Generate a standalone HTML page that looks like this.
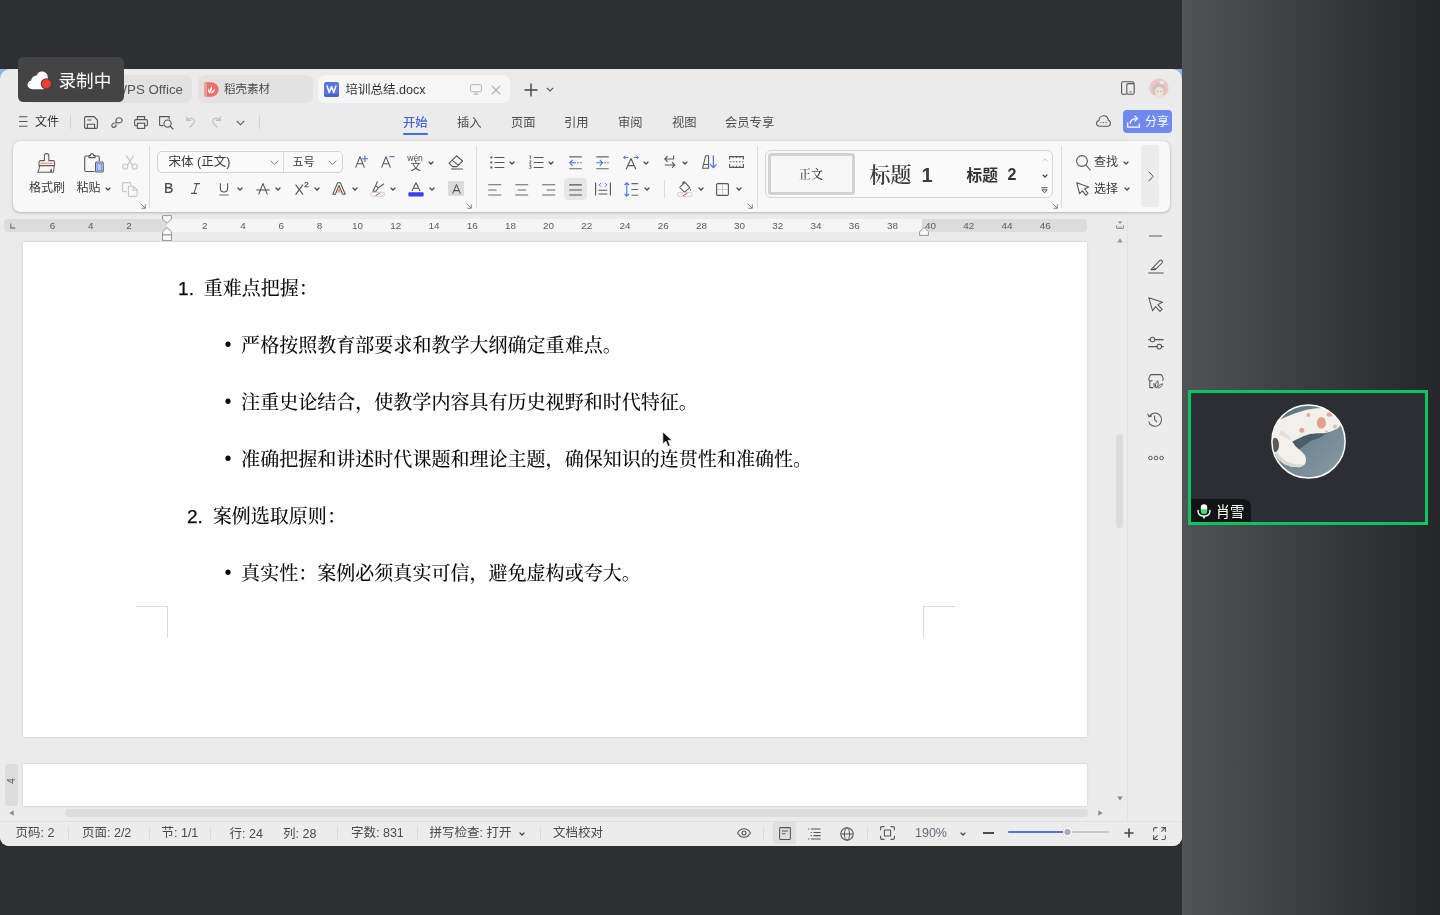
<!DOCTYPE html>
<html lang="zh-CN">
<head>
<meta charset="utf-8">
<title>培训总结.docx</title>
<style>
*{box-sizing:border-box;margin:0;padding:0}
html,body{width:1440px;height:915px;overflow:hidden}
body{background:#2d3033;font-family:"Liberation Sans","Noto Sans CJK SC",sans-serif;color:#3b3b3b;position:relative}
.abs{position:absolute}
svg{position:absolute;overflow:visible}
.t{position:absolute;white-space:nowrap;line-height:1}
#win,.ov{will-change:transform}
#right{left:1182px;top:0;width:258px;height:915px;background:linear-gradient(to right,#515356 0%,#3c3e41 45%,#242628 100%)}
#corner{left:0;top:69px;width:14px;height:14px;background:#8db4e6}
#corner2{left:1168px;top:69px;width:14px;height:14px;background:#8db4e6}
#win{z-index:0;left:0;top:69px;width:1182px;height:777px;background:#ebebeb;border-radius:10px 10px 9px 9px;overflow:hidden}
/* tabs */
.tab{position:absolute;top:6px;height:28px;border-radius:7px;background:#e2e2e2}
.tab.act{background:#f6f6f6}
/* ribbon */
#ribbon{left:12.5px;top:72.3px;width:1157px;height:70.4px;background:#f8f8f8;border-radius:7px;box-shadow:0 1px 3px rgba(0,0,0,.22),0 0 1px rgba(0,0,0,.2)}
.vsep{position:absolute;width:1px;background:#dcdcdc}
/* doc */
#page1{left:23px;top:173.4px;width:1064px;height:494.6px;background:#fefefe;box-shadow:0 0 2px rgba(0,0,0,.18)}
#page2{left:23px;top:695px;width:1064px;height:42px;background:#fefefe;box-shadow:0 0 2px rgba(0,0,0,.18)}
.doc{position:absolute;white-space:nowrap;font-family:"Liberation Sans","Noto Serif CJK SC",serif;font-size:19.05px;color:#0a0a0a;line-height:1;font-weight:500}
.sb{position:absolute;font-size:12.5px;color:#4a4a4a;white-space:nowrap;line-height:1}
.rul{position:absolute;font-size:9.9px;color:#5c5c5c;line-height:1;top:221px;transform:translateX(-50%)}
.sbs{top:827px;height:12px;background:#d9d9d9}
</style>
</head>
<body>
<div id="right" class="abs"></div>
<div id="corner" class="abs"></div>
<div id="corner2" class="abs"></div>
<div id="win" class="abs">
<!--TABS-->
<!-- tabs (win coords: y = screen-69) -->
<div class="tab" style="left:28px;width:164px"></div>
<div class="t" style="left:114.5px;top:14px;font-size:13.3px;color:#555">WPS Office</div>
<div class="tab" style="left:198px;width:115px"></div>
<svg style="left:203.5px;top:13px" width="15" height="15" viewBox="0 0 15 15"><path d="M0.5 1.5 Q0.5 0.3 1.8 0.3 H7.5 A7.2 7.2 0 0 1 7.5 14.7 H1.8 Q0.5 14.7 0.5 13.5Z" fill="#ec6f6c"/><path d="M0.5 1.5 Q0.5 0.3 1.8 0.3 H3 V14.7 H1.8 Q0.5 14.7 0.5 13.5Z" fill="#f09a97"/><path d="M5 11.2 C5 8.5 6 6 8 4.2 C8.3 6.5 7.5 9.5 5.6 11.4Z M6.8 11.3 C7.8 9.3 9.3 7.9 11 7.3 C10.7 9.3 9 11 7 11.6Z M4.6 10.6 C3.9 9.3 3.9 7.6 4.6 6.4 C5.2 7.6 5.2 9.3 4.9 10.6Z" fill="#fff"/></svg>
<div class="t" style="left:224px;top:15.2px;font-size:11.5px;color:#4a4a4a">稻壳素材</div>
<div class="tab act" style="left:318px;width:192px"></div>
<svg style="left:323.5px;top:13px" width="15" height="15" viewBox="0 0 15 15"><rect x="0" y="0" width="15" height="15" rx="2.2" fill="#5b74e3"/><path d="M0 12 H15 V12.8 Q15 15 12.8 15 H2.2 Q0 15 0 12.8Z" fill="#4a62cf"/><path d="M3.1 3.9 L5.2 10.6 L7.5 4.6 L9.8 10.6 L11.9 3.9" fill="none" stroke="#fff" stroke-width="1.5" stroke-linejoin="round" stroke-linecap="round"/></svg>
<div class="t" style="left:345.5px;top:14.7px;font-size:12.5px;color:#333">培训总结.docx</div>
<svg style="left:470px;top:15px" width="12" height="11" viewBox="0 0 12 11"><rect x="0.6" y="0.6" width="10.8" height="7.2" rx="1.2" fill="none" stroke="#b4b4b4" stroke-width="1"/><path d="M3.5 10.2 H8.5 M6 8 V10" stroke="#b4b4b4" stroke-width="1" fill="none"/></svg>
<svg style="left:491px;top:15.5px" width="10" height="10" viewBox="0 0 10 10"><path d="M0.7 0.7 L9.3 9.3 M9.3 0.7 L0.7 9.3" stroke="#a8a8a8" stroke-width="1.1" fill="none"/></svg>
<svg style="left:524px;top:14px" width="14" height="14" viewBox="0 0 14 14"><path d="M7 0.5 V13.5 M0.5 7 H13.5" stroke="#444" stroke-width="1.4" fill="none"/></svg>
<svg style="left:546px;top:18px" width="8" height="5" viewBox="0 0 8 5"><path d="M0.8 0.8 L4 4 L7.2 0.8" stroke="#555" stroke-width="1.2" fill="none"/></svg>
<!-- window right controls -->
<svg style="left:1121px;top:12px" width="14" height="14" viewBox="0 0 14 14"><path d="M5.8 13.2 H2 Q0.6 13.2 0.6 11.8 V2.2 Q0.6 0.8 2 0.8 H11.6 Q13 0.8 13 2.2 V3" fill="none" stroke="#555" stroke-width="1.1"/><rect x="5.8" y="2.6" width="7.4" height="10.6" rx="1.4" fill="none" stroke="#555" stroke-width="1.1"/><path d="M8.6 11 H10.6" stroke="#555" stroke-width="1"/></svg>
<svg style="left:1148.5px;top:8.5px;opacity:.6" width="20" height="20" viewBox="0 0 20 20"><defs><clipPath id="ua"><circle cx="10" cy="10" r="9.6"/></clipPath></defs><g clip-path="url(#ua)"><rect width="20" height="20" fill="#f2a9b4"/><ellipse cx="10" cy="12" rx="6.6" ry="7.6" fill="#b9aa9c"/><ellipse cx="10.4" cy="13.6" rx="4.4" ry="4.6" fill="#efdcc6"/><ellipse cx="13" cy="4.6" rx="2.6" ry="2" fill="#f7dfe2"/><rect x="0" y="17" width="20" height="3" fill="#e9e0d0"/><circle cx="8.6" cy="13.4" r="0.7" fill="#8a7a70"/><circle cx="12.2" cy="13.4" r="0.7" fill="#8a7a70"/></g></svg>
<!-- menu row -->
<svg style="left:19px;top:47px" width="9" height="11" viewBox="0 0 9 11"><path d="M0 0.8 H8.4 M0 5.5 H8.4 M0 10.2 H8.4" stroke="#555" stroke-width="1.1"/></svg>
<div class="t" style="left:35px;top:47px;font-size:12px;color:#333">文件</div>
<div class="vsep" style="left:70px;top:46px;height:14px;background:#d4d4d4"></div>
<svg style="left:84px;top:46.5px" width="14" height="13" viewBox="0 0 14 13"><path d="M0.6 2 Q0.6 0.6 2 0.6 H10 L13.4 4 V11 Q13.4 12.4 12 12.4 H2 Q0.6 12.4 0.6 11Z" fill="none" stroke="#555" stroke-width="1.1"/><path d="M3.4 12.4 V8.2 H10.6 V12.4 M3.4 4 H7.6" fill="none" stroke="#555" stroke-width="1.1"/></svg>
<svg style="left:110.5px;top:48px" width="12" height="11" viewBox="0 0 12 11"><path d="M5.6 5.6 C4 3.4 5.4 0.7 8 0.7 C10.8 0.7 12 3.4 10.6 5 C9.6 6.2 7.8 6 6.2 5.8 C4.2 5.6 2.2 5.8 1.2 7.2 C0.2 8.8 1.2 10.4 2.8 10.4 C4.6 10.4 5.6 8.8 5 7.4" fill="none" stroke="#555" stroke-width="1.1" stroke-linecap="round"/></svg>
<svg style="left:134px;top:46.5px" width="14" height="13" viewBox="0 0 14 13"><path d="M3.4 3.6 V0.6 H10.6 V3.6" fill="none" stroke="#555" stroke-width="1.1"/><path d="M3.2 9.8 H2 Q0.6 9.8 0.6 8.4 V5 Q0.6 3.6 2 3.6 H12 Q13.4 3.6 13.4 5 V8.4 Q13.4 9.8 12 9.8 H10.8" fill="none" stroke="#555" stroke-width="1.1"/><rect x="3.4" y="7.2" width="7.2" height="5.2" fill="none" stroke="#555" stroke-width="1.1"/></svg>
<svg style="left:159px;top:47px" width="15" height="14" viewBox="0 0 15 14"><path d="M4.5 9.6 H1.8 Q0.6 9.6 0.6 8.4 V0.6 H10.2 V3.2" fill="none" stroke="#555" stroke-width="1.1"/><circle cx="8.6" cy="7.6" r="3.6" fill="none" stroke="#555" stroke-width="1.1"/><path d="M11.2 10.2 L14 13" stroke="#555" stroke-width="1.1" stroke-linecap="round"/></svg>
<svg style="left:186px;top:47px" width="10" height="12" viewBox="0 0 10 12"><path d="M0.8 0.6 V4.4 H4.6 M0.9 4.3 C2.6 2.2 5.6 1.6 7.4 3.2 C9.2 4.8 8.4 7.6 3.8 11.2" fill="none" stroke="#bdbdbd" stroke-width="1.1" stroke-linecap="round" stroke-linejoin="round"/></svg>
<svg style="left:211px;top:47px" width="10" height="12" viewBox="0 0 10 12"><path d="M9.2 0.6 V4.4 H5.4 M9.1 4.3 C7.4 2.2 4.4 1.6 2.6 3.2 C0.8 4.8 1.6 7.6 6.2 11.2" fill="none" stroke="#bdbdbd" stroke-width="1.1" stroke-linecap="round" stroke-linejoin="round"/></svg>
<svg style="left:236px;top:50.5px" width="9" height="6" viewBox="0 0 9 6"><path d="M0.7 0.8 L4.5 4.8 L8.3 0.8" stroke="#555" stroke-width="1.1" fill="none"/></svg>
<div class="vsep" style="left:259px;top:46px;height:14px;background:#d4d4d4"></div>
<div class="t" style="left:403px;top:47.5px;font-size:12.3px;color:#4466d6;font-weight:500">开始</div>
<div class="abs" style="left:403px;top:63.5px;width:25px;height:2px;background:#4a6ddc;border-radius:1px"></div>
<div class="t" style="left:457px;top:47.5px;font-size:12.3px;color:#4a4a4a">插入</div>
<div class="t" style="left:511px;top:47.5px;font-size:12.3px;color:#4a4a4a">页面</div>
<div class="t" style="left:564px;top:47.5px;font-size:12.3px;color:#4a4a4a">引用</div>
<div class="t" style="left:618px;top:47.5px;font-size:12.3px;color:#4a4a4a">审阅</div>
<div class="t" style="left:672px;top:47.5px;font-size:12.3px;color:#4a4a4a">视图</div>
<div class="t" style="left:725px;top:47.5px;font-size:12.3px;color:#4a4a4a">会员专享</div>
<svg style="left:1096px;top:46px" width="15" height="12" viewBox="0 0 15 12"><path d="M3.6 11.2 C1.6 11.2 0.6 9.8 0.6 8.4 C0.6 7 1.6 5.9 2.9 5.7 C3.1 2.8 5.2 0.7 7.7 0.7 C10.2 0.7 12 2.6 12.3 5 C13.6 5.4 14.4 6.6 14.4 8 C14.4 9.8 13 11.2 11.4 11.2Z" fill="none" stroke="#555" stroke-width="1.1"/><circle cx="5" cy="7.6" r="0.7" fill="#555"/><circle cx="7.5" cy="7.6" r="0.7" fill="#555"/><circle cx="10" cy="7.6" r="0.7" fill="#555"/></svg>
<div class="abs" style="left:1123px;top:41px;width:49px;height:23px;border-radius:4px;background:#7089f1"></div>
<svg style="left:1127px;top:46px" width="13" height="13" viewBox="0 0 13 13"><path d="M0.7 7.4 V12.2 H12.3 V8.6" fill="none" stroke="#fff" stroke-width="1.2"/><path d="M3 8.6 C3.4 5.4 5.6 3.6 9.6 3.6 M7.6 0.8 L10.6 3.6 L7.6 6.4" fill="none" stroke="#fff" stroke-width="1.2"/></svg>
<div class="t" style="left:1145px;top:46.5px;font-size:12px;color:#fff">分享</div>
<!--MENU-->
<div id="ribbon" class="abs"></div>
<div id="page1" class="abs"></div>
<div id="page2" class="abs"></div>
<div id="scr" class="abs" style="left:0;top:-69px;width:1182px;height:915px">
<!-- ribbon contents in screen coords -->
<div>
<!-- clipboard group -->
<svg style="left:37px;top:153px" width="19" height="20" viewBox="0 0 19 20"><path d="M7.4 7.6 V2.6 Q7.4 0.6 9.6 0.6 Q11.8 0.6 11.8 2.6 V7.6 H15.8 Q17.6 7.6 17.6 9.4 V12.6 H2 V9.4 Q2 7.6 3.8 7.6Z" fill="none" stroke="#5a5a5a" stroke-width="1.05" stroke-linejoin="round"/><path d="M2.6 12.6 C2.5 15 1.9 17.2 0.8 19.3 H13.2 C13.8 18.2 14.1 17.2 14.3 16.2 C14.5 17.2 14.5 18.2 14.2 19.3 H16.2 C17 17 17.3 15 17.1 12.6" fill="none" stroke="#5a5a5a" stroke-width="1.05" stroke-linejoin="round"/><path d="M3.4 10.2 H16.2" stroke="#e8825a" stroke-width="1.1"/></svg>
<div class="t" style="left:29px;top:181.5px;font-size:12px;color:#3a3a3a">格式刷</div>
<svg style="left:84px;top:153px" width="20" height="20" viewBox="0 0 20 20"><path d="M5 3 H2.2 Q0.7 3 0.7 4.5 V17 Q0.7 18.5 2.2 18.5 H10.5 M11 3 H13.8 Q15.3 3 15.3 4.5 V8" fill="none" stroke="#555" stroke-width="1.1"/><path d="M5 4.6 V2.6 H6.4 Q6.4 0.6 8 0.6 Q9.6 0.6 9.6 2.6 H11 V4.6Z" fill="none" stroke="#555" stroke-width="1.1" stroke-linejoin="round"/><rect x="11.6" y="9" width="7.6" height="10" rx="1" fill="#fff" stroke="#555" stroke-width="1.1"/><rect x="13" y="10.3" width="4.8" height="7.4" fill="#b9c9fb" stroke="#5a7bf0" stroke-width="0.9"/></svg>
<div class="t" style="left:76.5px;top:181.5px;font-size:12px;color:#3a3a3a">粘贴</div>
<svg class="car" style="left:105px;top:186.8px" width="6" height="4" viewBox="0 0 6 4"><path d="M0.6 0.6 L3 3 L5.4 0.6" fill="none" stroke="#444" stroke-width="1.3"/></svg>
<svg style="left:121.5px;top:155px" width="16" height="15" viewBox="0 0 16 15"><path d="M4.4 0.6 L10.6 10.4 M11.6 0.6 L5.4 10.4" stroke="#c6c6c6" stroke-width="1.1" fill="none"/><circle cx="3.3" cy="11.6" r="2.6" fill="none" stroke="#c6c6c6" stroke-width="1.1"/><circle cx="12.7" cy="11.6" r="2.6" fill="none" stroke="#c6c6c6" stroke-width="1.1"/></svg>
<svg style="left:121.5px;top:181.5px" width="16" height="15" viewBox="0 0 16 15"><path d="M4.6 9.6 H2 Q0.6 9.6 0.6 8.2 V2 Q0.6 0.6 2 0.6 H7.4 Q8.8 0.6 8.8 2 V3.6" fill="none" stroke="#c6c6c6" stroke-width="1.1"/><path d="M6.4 4.2 H11.4 L15.2 8 V13 Q15.2 14.4 13.8 14.4 H7.8 Q6.4 14.4 6.4 13Z" fill="none" stroke="#c6c6c6" stroke-width="1.1" stroke-linejoin="round"/><path d="M11.2 4.4 V8.2 H15" fill="none" stroke="#c6c6c6" stroke-width="1.1"/></svg>
<svg class="lau" style="left:139.5px;top:202.7px" width="6" height="6" viewBox="0 0 6 6"><path d="M0.6 0.6 L5 5 M5.3 1.4 V5.3 H1.4" fill="none" stroke="#777" stroke-width="0.9"/></svg>
<div class="vsep" style="left:148.5px;top:146px;height:62px"></div>
<!-- font group -->
<div class="abs" style="left:157px;top:150.5px;width:185.5px;height:22.5px;border:1px solid #d3d3d3;border-radius:5px;background:#fafafa"></div>
<div class="abs" style="left:283px;top:151px;width:1px;height:21.5px;background:#d8d8d8"></div>
<div class="t" style="left:168.5px;top:155.5px;font-size:12.5px;color:#3a3a3a">宋体 (正文)</div>
<svg style="left:270px;top:159.5px" width="9" height="6" viewBox="0 0 9 6"><path d="M0.6 0.7 L4.4 4.6 L8.2 0.7" fill="none" stroke="#777" stroke-width="1"/></svg>
<div class="t" style="left:292.5px;top:156.5px;font-size:11px;color:#3a3a3a">五号</div>
<svg style="left:328px;top:159.5px" width="9" height="6" viewBox="0 0 9 6"><path d="M0.6 0.7 L4.4 4.6 L8.2 0.7" fill="none" stroke="#777" stroke-width="1"/></svg>
<svg style="left:354.5px;top:154px" width="15" height="15" viewBox="0 0 15 15"><path d="M0.6 13.6 L5 2.6 L9.4 13.6 M2.2 9.8 H7.8" fill="none" stroke="#555" stroke-width="1.1" stroke-linejoin="round"/><path d="M9.9 1.6 V8 M6.7 4.8 H13.1" stroke="#4a6fe8" stroke-width="1.1" fill="none"/></svg>
<svg style="left:381px;top:154px" width="15" height="15" viewBox="0 0 15 15"><path d="M0.6 13.6 L5 2.6 L9.4 13.6 M2.2 9.8 H7.8" fill="none" stroke="#555" stroke-width="1.1" stroke-linejoin="round"/><path d="M8.2 2.6 H13.6" stroke="#4a6fe8" stroke-width="1.1" fill="none"/></svg>
<div class="t" style="left:407.3px;top:153.6px;font-size:8.6px;color:#4a4a4a;letter-spacing:-.1px">wén</div>
<div class="t" style="left:410.4px;top:161.3px;font-size:10.6px;color:#4a4a4a">文</div>
<svg class="car" style="left:428.0px;top:160.7px" width="6" height="4" viewBox="0 0 6 4"><path d="M0.6 0.6 L3 3 L5.4 0.6" fill="none" stroke="#444" stroke-width="1.3"/></svg>
<svg style="left:448px;top:154.5px" width="16" height="15" viewBox="0 0 16 15"><path d="M8.6 0.8 L14.6 6 L9 11.6 H4.6 L1 8.2Z M4.6 5.6 L10.4 10.4" fill="none" stroke="#555" stroke-width="1.1" stroke-linejoin="round"/><path d="M3 14 H15" stroke="#555" stroke-width="1"/></svg>
<!-- row 2 -->
<div class="t" style="left:164px;top:181px;font-size:14px;color:#444;font-weight:400;-webkit-text-stroke:.2px #444">B</div>
<svg style="left:190px;top:183px" width="11" height="11" viewBox="0 0 11 11"><path d="M4 0.6 H10 M1 10.4 H7 M7 0.6 L4 10.4" fill="none" stroke="#555" stroke-width="1.1"/></svg>
<svg style="left:219px;top:182.5px" width="10" height="13" viewBox="0 0 10 13"><path d="M1.4 0.3 V5.6 Q1.4 9 5 9 Q8.6 9 8.6 5.6 V0.3" fill="none" stroke="#555" stroke-width="1.1"/><path d="M0.4 12 H9.6" stroke="#666" stroke-width="1"/></svg>
<svg class="car" style="left:236.5px;top:186.8px" width="6" height="4" viewBox="0 0 6 4"><path d="M0.6 0.6 L3 3 L5.4 0.6" fill="none" stroke="#444" stroke-width="1.3"/></svg>
<svg style="left:255.5px;top:182.5px" width="14" height="12" viewBox="0 0 14 12"><path d="M2.6 11.4 L7 0.6 L11.4 11.4" fill="none" stroke="#555" stroke-width="1.1" stroke-linejoin="round"/><path d="M0.3 7 H13.7" stroke="#555" stroke-width="1.1"/></svg>
<svg class="car" style="left:275px;top:186.8px" width="6" height="4" viewBox="0 0 6 4"><path d="M0.6 0.6 L3 3 L5.4 0.6" fill="none" stroke="#444" stroke-width="1.3"/></svg>
<svg style="left:295px;top:182px" width="14" height="13" viewBox="0 0 14 13"><path d="M0.6 2.6 L8 12.6 M8 2.6 L0.6 12.6" fill="none" stroke="#555" stroke-width="1.1"/></svg>
<div class="t" style="left:304.3px;top:181.3px;font-size:8px;color:#4a4a4a;font-weight:400;-webkit-text-stroke:.25px #4a4a4a">2</div>
<svg class="car" style="left:313.5px;top:186.8px" width="6" height="4" viewBox="0 0 6 4"><path d="M0.6 0.6 L3 3 L5.4 0.6" fill="none" stroke="#444" stroke-width="1.3"/></svg>
<svg style="left:332px;top:182px" width="14" height="13" viewBox="0 0 14 13"><path d="M0.8 12.2 L5.6 0.8 H8.4 L13.2 12.2 H10.6 L7 3.4 L3.4 12.2Z" fill="none" stroke="#555" stroke-width="1.05" stroke-linejoin="round"/><path d="M7 5.6 L9 10.4 H5Z" fill="#e99a6c"/></svg>
<svg class="car" style="left:352px;top:186.8px" width="6" height="4" viewBox="0 0 6 4"><path d="M0.6 0.6 L3 3 L5.4 0.6" fill="none" stroke="#444" stroke-width="1.3"/></svg>
<svg style="left:370px;top:181px" width="16" height="16" viewBox="0 0 16 16"><path d="M3 10.2 L5.6 4.6 L8.4 6.8 L6 10.2Z M8.4 6.8 L13.6 3 M5.6 4.6 L7.4 0.8" fill="none" stroke="#555" stroke-width="1.05" stroke-linejoin="round" stroke-linecap="round"/><rect x="0.6" y="11.4" width="14" height="3.8" rx="1.6" fill="#fafafa" stroke="#c9c9c9" stroke-width="0.9"/><path d="M5.6 14.6 L10 12" stroke="#e4453a" stroke-width="1"/></svg>
<svg class="car" style="left:390px;top:186.8px" width="6" height="4" viewBox="0 0 6 4"><path d="M0.6 0.6 L3 3 L5.4 0.6" fill="none" stroke="#444" stroke-width="1.3"/></svg>
<svg style="left:408px;top:182px" width="16" height="15" viewBox="0 0 16 15"><path d="M4 9 L8 0.8 L12 9 M5.4 6.2 H10.6" fill="none" stroke="#555" stroke-width="1.1" stroke-linejoin="round"/><rect x="0.4" y="10.2" width="15.2" height="4.2" rx="1" fill="#3a3ff0"/></svg>
<svg class="car" style="left:428.5px;top:186.8px" width="6" height="4" viewBox="0 0 6 4"><path d="M0.6 0.6 L3 3 L5.4 0.6" fill="none" stroke="#444" stroke-width="1.3"/></svg>
<div class="abs" style="left:448.3px;top:181.3px;width:15.4px;height:14.6px;background:#dbdbdb;border-radius:1.5px"></div>
<svg style="left:451.5px;top:183.5px" width="9" height="10" viewBox="0 0 9 10"><path d="M0.6 9.6 L4.5 0.6 L8.4 9.6 M2 6.6 H7" fill="none" stroke="#555" stroke-width="1.05" stroke-linejoin="round"/></svg>
<svg class="lau" style="left:465.5px;top:202.7px" width="6" height="6" viewBox="0 0 6 6"><path d="M0.6 0.6 L5 5 M5.3 1.4 V5.3 H1.4" fill="none" stroke="#777" stroke-width="0.9"/></svg>
<div class="vsep" style="left:475.5px;top:146px;height:62px"></div>
</div>
<div>
<!-- paragraph group row1 -->
<svg style="left:489.5px;top:156px" width="15" height="13" viewBox="0 0 15 13"><circle cx="1.3" cy="1.5" r="1.15" fill="#666"/><circle cx="1.3" cy="6.5" r="1.15" fill="#666"/><circle cx="1.3" cy="11.5" r="1.15" fill="#666"/><path d="M4.6 1.5 H14.4 M4.6 6.5 H14.4 M4.6 11.5 H14.4" stroke="#555" stroke-width="1.1"/></svg>
<svg class="car" style="left:509.0px;top:160.7px" width="6" height="4" viewBox="0 0 6 4"><path d="M0.6 0.6 L3 3 L5.4 0.6" fill="none" stroke="#444" stroke-width="1.3"/></svg>
<svg style="left:528.5px;top:155px" width="15" height="14" viewBox="0 0 15 14"><path d="M4.8 2.5 H14.4 M4.8 7.5 H14.4 M4.8 12.5 H14.4" stroke="#555" stroke-width="1.1"/><path d="M0.4 1.2 L1.4 0.5 V4 M0.3 5.9 H2.2 L0.4 8.8 H2.4 M0.3 10.6 H2.2 L1.2 11.9 Q2.4 12.2 2.2 13 Q1.8 13.9 0.3 13.5" fill="none" stroke="#555" stroke-width="0.8"/></svg>
<svg class="car" style="left:547.5px;top:160.7px" width="6" height="4" viewBox="0 0 6 4"><path d="M0.6 0.6 L3 3 L5.4 0.6" fill="none" stroke="#444" stroke-width="1.3"/></svg>
<svg style="left:568.5px;top:155.5px" width="13" height="14" viewBox="0 0 13 14"><path d="M0.3 0.9 H12.7 M0.3 12.7 H12.7" stroke="#666" stroke-width="1.1"/><path d="M8.2 6.8 H9.8 M11 6.8 H12.7" stroke="#666" stroke-width="1.1"/><path d="M0.8 6.8 H7 M3.6 3.8 L0.8 6.8 L3.6 9.8" fill="none" stroke="#4a6fe8" stroke-width="1.1"/></svg>
<svg style="left:595.5px;top:155.5px" width="13" height="14" viewBox="0 0 13 14"><path d="M0.3 0.9 H12.7 M0.3 12.7 H12.7" stroke="#666" stroke-width="1.1"/><path d="M8.4 6.8 H10 M11.2 6.8 H12.7" stroke="#666" stroke-width="1.1"/><path d="M0.3 6.8 H6.6 M3.8 3.8 L6.6 6.8 L3.8 9.8" fill="none" stroke="#4a6fe8" stroke-width="1.1"/></svg>
<svg style="left:623px;top:154.5px" width="16" height="15" viewBox="0 0 16 15"><path d="M3.2 14.2 L8 3.6 L12.8 14.2 M4.8 10.6 H11.2" fill="none" stroke="#555" stroke-width="1.1" stroke-linejoin="round"/><path d="M0.6 2.4 H5.4 M2.4 0.6 L0.6 2.4 L2.4 4.2 M10.6 2.4 H15.4 M13.6 0.6 L15.4 2.4 L13.6 4.2" fill="none" stroke="#4a6fe8" stroke-width="1"/></svg>
<svg class="car" style="left:643.0px;top:160.7px" width="6" height="4" viewBox="0 0 6 4"><path d="M0.6 0.6 L3 3 L5.4 0.6" fill="none" stroke="#444" stroke-width="1.3"/></svg>
<svg style="left:664px;top:155px" width="12" height="14" viewBox="0 0 12 14"><path d="M9.6 0.6 V4 H0.8 M3.6 1.2 L0.8 4 L3.6 6.8" fill="none" stroke="#555" stroke-width="1.1"/><path d="M0.8 10 H10.8 M8 7.2 L10.8 10 L8 12.8" fill="none" stroke="#555" stroke-width="1.1"/></svg>
<svg class="car" style="left:681.5px;top:160.7px" width="6" height="4" viewBox="0 0 6 4"><path d="M0.6 0.6 L3 3 L5.4 0.6" fill="none" stroke="#444" stroke-width="1.3"/></svg>
<svg style="left:702px;top:155px" width="16" height="14" viewBox="0 0 16 14"><path d="M0.6 13.2 L3.6 0.8 H6.6 V13.2Z M1.6 9.4 H6.4" fill="none" stroke="#555" stroke-width="1.05" stroke-linejoin="round"/><path d="M11.4 0.6 V12.6 M8.2 9.4 L11.4 12.6 L14.6 9.4" fill="none" stroke="#4a6fe8" stroke-width="1.2"/></svg>
<svg style="left:729px;top:156px" width="15" height="12" viewBox="0 0 15 12"><path d="M0.6 3.6 V0.6 H14.4 V3.6 M0.6 8 V11.4 H14.4 V8" fill="none" stroke="#555" stroke-width="1.1"/><path d="M0.6 5.8 H14.4" stroke="#555" stroke-width="1.1" stroke-dasharray="1.6 1.5"/><path d="M4 9.6 V11.4 M7.5 9.6 V11.4 M11 9.6 V11.4 M4 0.6 V2 M7.5 0.6 V2 M11 0.6 V2" stroke="#555" stroke-width="0.9"/></svg>
<!-- row2 -->
<svg style="left:488px;top:183.5px" width="14" height="12" viewBox="0 0 14 12"><path d="M0.2 0.8 H13.2 M0.2 6 H8.6 M0.2 11 H13.2" stroke="#666" stroke-width="1.1"/></svg>
<svg style="left:515px;top:183.5px" width="14" height="12" viewBox="0 0 14 12"><path d="M0.2 0.8 H13.2 M2.6 6 H10.8 M0.2 11 H13.2" stroke="#666" stroke-width="1.1"/></svg>
<svg style="left:541.5px;top:183.5px" width="14" height="12" viewBox="0 0 14 12"><path d="M0.2 0.8 H13.2 M4.8 6 H13.2 M0.2 11 H13.2" stroke="#666" stroke-width="1.1"/></svg>
<div class="abs" style="left:564px;top:177.5px;width:22.5px;height:22.5px;border-radius:4px;background:#e7e7e7"></div>
<svg style="left:568.5px;top:183.5px" width="14" height="12" viewBox="0 0 14 12"><path d="M0.2 0.8 H12.8 M0.2 6 H12.8 M0.2 11 H12.8" stroke="#555" stroke-width="1.2"/></svg>
<svg style="left:594.5px;top:181.5px" width="16" height="14" viewBox="0 0 16 14"><path d="M0.6 0.4 V13.6 M15.4 0.4 V13.6" stroke="#555" stroke-width="1.1"/><path d="M3.6 8.2 H12.4 M3.6 12 H12.4" stroke="#555" stroke-width="1.1"/><path d="M6.2 0.8 L4.2 2.8 L6.2 4.8 M9.8 0.8 L11.8 2.8 L9.8 4.8" fill="none" stroke="#4a6fe8" stroke-width="1"/></svg>
<svg style="left:624px;top:181.5px" width="15" height="15" viewBox="0 0 15 15"><path d="M2.8 0.8 V14.2 M0.6 3 L2.8 0.8 L5 3 M0.6 12 L2.8 14.2 L5 12" fill="none" stroke="#4a6fe8" stroke-width="1.1"/><path d="M7.4 1.6 H14.2 M7.4 7.5 H14.2 M7.4 13.2 H14.2" stroke="#666" stroke-width="1.1"/></svg>
<svg class="car" style="left:643.5px;top:186.8px" width="6" height="4" viewBox="0 0 6 4"><path d="M0.6 0.6 L3 3 L5.4 0.6" fill="none" stroke="#444" stroke-width="1.3"/></svg>
<div class="vsep" style="left:664px;top:180px;height:17.5px"></div>
<svg style="left:677px;top:180.5px" width="16" height="16" viewBox="0 0 16 16"><path d="M3.4 5.6 L8 1.4 L12.8 6.6 L8.2 10.6 Q7.4 11.2 6.6 10.4 L3.2 7 Q2.6 6.2 3.4 5.6Z M6 3.6 Q5 0.6 7.6 0.8" fill="none" stroke="#555" stroke-width="1.05" stroke-linejoin="round"/><path d="M13.6 7.6 Q14.8 9.4 13.6 10 Q12.4 9.4 13.6 7.6Z" fill="#555"/><rect x="0.6" y="11.6" width="14.6" height="3.8" rx="1.6" fill="#fafafa" stroke="#c9c9c9" stroke-width="0.9"/><path d="M6 14.8 L10.4 12.2" stroke="#e4453a" stroke-width="1"/></svg>
<svg class="car" style="left:697.5px;top:186.8px" width="6" height="4" viewBox="0 0 6 4"><path d="M0.6 0.6 L3 3 L5.4 0.6" fill="none" stroke="#444" stroke-width="1.3"/></svg>
<svg style="left:716px;top:182.5px" width="13" height="13" viewBox="0 0 13 13"><rect x="0.6" y="0.6" width="11.8" height="11.8" rx="1.2" fill="none" stroke="#555" stroke-width="1.1"/><path d="M6.5 1 V12 M1 6.5 H12" stroke="#c4c4c4" stroke-width="0.9"/></svg>
<svg class="car" style="left:735.5px;top:186.8px" width="6" height="4" viewBox="0 0 6 4"><path d="M0.6 0.6 L3 3 L5.4 0.6" fill="none" stroke="#444" stroke-width="1.3"/></svg>
<svg class="lau" style="left:746.5px;top:202.7px" width="6" height="6" viewBox="0 0 6 6"><path d="M0.6 0.6 L5 5 M5.3 1.4 V5.3 H1.4" fill="none" stroke="#777" stroke-width="0.9"/></svg>
<div class="vsep" style="left:756.5px;top:146px;height:62px"></div>
<!-- styles gallery -->
<div class="abs" style="left:764.5px;top:150px;width:288px;height:47.5px;border:1px solid #d6d6d6;border-radius:6px;background:#fafafa"></div>
<div class="abs" style="left:767.5px;top:153.3px;width:87.5px;height:41.7px;border:3px solid #d2d2d2;border-radius:3px;background:#f7f7f7"></div>
<div class="t" style="left:799px;top:169px;font-size:12px;color:#1e1e1e;font-family:'Liberation Serif','Noto Serif CJK SC',serif">正文</div>
<div class="t" style="left:869.5px;top:164.5px;font-size:21px;color:#3c3c3c;font-family:'Liberation Serif','Noto Serif CJK SC',serif;font-weight:600">标题</div>
<div class="t" style="left:921.5px;top:165px;font-size:20px;color:#3c3c3c;font-weight:700">1</div>
<div class="t" style="left:966.5px;top:167.5px;font-size:15.7px;color:#333;font-weight:700">标题</div>
<div class="t" style="left:1007.5px;top:167px;font-size:16px;color:#333;font-weight:700">2</div>
<svg style="left:1041.5px;top:157.5px" width="6" height="4" viewBox="0 0 6 4"><path d="M0.6 3.2 L3 0.8 L5.4 3.2" fill="none" stroke="#c9c9c9" stroke-width="1"/></svg>
<svg style="left:1041.5px;top:173.5px" width="6" height="4" viewBox="0 0 6 4"><path d="M0.6 0.6 L3 3 L5.4 0.6" fill="none" stroke="#444" stroke-width="1.3"/></svg>
<svg style="left:1041px;top:187px" width="7" height="7" viewBox="0 0 7 7"><path d="M0.4 0.7 H6.6" stroke="#555" stroke-width="1"/><path d="M0.8 2.8 H6.2 L3.5 5.8Z" fill="none" stroke="#555" stroke-width="1" stroke-linejoin="round"/></svg>
<svg class="lau" style="left:1051.5px;top:202.7px" width="6" height="6" viewBox="0 0 6 6"><path d="M0.6 0.6 L5 5 M5.3 1.4 V5.3 H1.4" fill="none" stroke="#777" stroke-width="0.9"/></svg>
<div class="vsep" style="left:1060.5px;top:146px;height:62px"></div>
<!-- find/select -->
<svg style="left:1075.5px;top:154.5px" width="15" height="16" viewBox="0 0 15 16"><circle cx="6" cy="6" r="5.4" fill="none" stroke="#555" stroke-width="1.1"/><path d="M10 10.2 L14.2 15" stroke="#555" stroke-width="1.1" stroke-linecap="round"/></svg>
<div class="t" style="left:1094px;top:155.5px;font-size:12px;color:#3a3a3a">查找</div>
<svg class="car" style="left:1123.0px;top:160.7px" width="6" height="4" viewBox="0 0 6 4"><path d="M0.6 0.6 L3 3 L5.4 0.6" fill="none" stroke="#444" stroke-width="1.3"/></svg>
<svg style="left:1075.5px;top:181.5px" width="14" height="14" viewBox="0 0 14 14"><path d="M0.7 0.7 L12.6 5 L8.6 7 L12 11.4 L9.8 13.2 L6.4 8.8 L3.6 11.6Z" fill="none" stroke="#555" stroke-width="1.1" stroke-linejoin="round"/></svg>
<div class="t" style="left:1094px;top:183px;font-size:12px;color:#3a3a3a">选择</div>
<svg class="car" style="left:1123.5px;top:187px" width="6" height="4" viewBox="0 0 6 4"><path d="M0.6 0.6 L3 3 L5.4 0.6" fill="none" stroke="#444" stroke-width="1.3"/></svg>
<div class="abs" style="left:1141px;top:145px;width:18px;height:62px;border-radius:4px;background:#ececec"></div>
<svg style="left:1148px;top:171px" width="6" height="11" viewBox="0 0 6 11"><path d="M0.6 0.6 L5.2 5.4 L0.6 10.2" fill="none" stroke="#555" stroke-width="1"/></svg>
</div>
<!--RIBBON2-->
<!--RULERS-->
<div class="abs" style="left:4px;top:218.7px;width:1083px;height:13.5px;border-radius:4px;background:#dcdcdc"></div>
<div class="abs" style="left:166.5px;top:218.7px;width:755px;height:13.5px;background:#f5f5f5"></div>
<svg style="left:10px;top:222.5px" width="6" height="6" viewBox="0 0 6 6"><path d="M0.8 0.4 V5 H5.2" fill="none" stroke="#808080" stroke-width="1.3"/></svg>
<div class="rul" style="left:52.6px">6</div>
<div class="rul" style="left:90.8px">4</div>
<div class="rul" style="left:129.0px">2</div>
<div class="rul" style="left:204.8px">2</div>
<div class="rul" style="left:243.0px">4</div>
<div class="rul" style="left:281.2px">6</div>
<div class="rul" style="left:319.4px">8</div>
<div class="rul" style="left:357.6px">10</div>
<div class="rul" style="left:395.8px">12</div>
<div class="rul" style="left:434.0px">14</div>
<div class="rul" style="left:472.2px">16</div>
<div class="rul" style="left:510.4px">18</div>
<div class="rul" style="left:548.6px">20</div>
<div class="rul" style="left:586.8px">22</div>
<div class="rul" style="left:625.0px">24</div>
<div class="rul" style="left:663.2px">26</div>
<div class="rul" style="left:701.4px">28</div>
<div class="rul" style="left:739.6px">30</div>
<div class="rul" style="left:777.8px">32</div>
<div class="rul" style="left:816.0px">34</div>
<div class="rul" style="left:854.2px">36</div>
<div class="rul" style="left:892.4px">38</div>
<div class="rul" style="left:930.6px">40</div>
<div class="rul" style="left:968.8px">42</div>
<div class="rul" style="left:1007.0px">44</div>
<div class="rul" style="left:1045.2px">46</div>
<svg style="left:161.5px;top:214.5px" width="10" height="9" viewBox="0 0 10 9"><path d="M0.6 0.6 H9.4 V4.2 L5 8.2 L0.6 4.2Z" fill="#fafafa" stroke="#8a8a8a" stroke-width="0.9" stroke-linejoin="round"/></svg>
<svg style="left:161.5px;top:227px" width="10" height="14" viewBox="0 0 10 14"><path d="M0.6 8 V4.6 L5 0.6 L9.4 4.6 V8Z" fill="#fafafa" stroke="#8a8a8a" stroke-width="0.9" stroke-linejoin="round"/><rect x="0.6" y="8" width="8.8" height="5.4" fill="#fafafa" stroke="#8a8a8a" stroke-width="0.9"/></svg>
<svg style="left:918.5px;top:227px" width="10" height="9" viewBox="0 0 10 9"><path d="M0.6 8.4 V4.6 L5 0.6 L9.4 4.6 V8.4Z" fill="#fafafa" stroke="#8a8a8a" stroke-width="0.9" stroke-linejoin="round"/></svg>
<!--DOCS-->
<div class="abs" style="left:136px;top:606px;width:31.5px;height:1px;background:#dadada"></div>
<div class="abs" style="left:167px;top:606px;width:1px;height:32px;background:#dadada"></div>
<div class="abs" style="left:923px;top:606px;width:32px;height:1px;background:#dadada"></div>
<div class="abs" style="left:923px;top:606px;width:1px;height:32px;background:#dadada"></div>
<div class="doc" style="left:178.1px;top:278.6px;-webkit-text-stroke:.25px #111">1.</div>
<div class="doc" style="left:203.7px;top:278.6px">重难点把握：</div>
<div class="doc" style="left:224.6px;top:334.1px;font-size:20px">•</div>
<div class="doc" style="left:241.1px;top:336.1px">严格按照教育部要求和教学大纲确定重难点。</div>
<div class="doc" style="left:224.6px;top:391.3px;font-size:20px">•</div>
<div class="doc" style="left:241.1px;top:393.3px">注重史论结合，使教学内容具有历史视野和时代特征。</div>
<div class="doc" style="left:224.6px;top:448.4px;font-size:20px">•</div>
<div class="doc" style="left:241.1px;top:450.4px">准确把握和讲述时代课题和理论主题，确保知识的连贯性和准确性。</div>
<div class="doc" style="left:186.9px;top:506.6px;-webkit-text-stroke:.25px #111">2.</div>
<div class="doc" style="left:212.7px;top:506.6px">案例选取原则：</div>
<div class="doc" style="left:224.6px;top:561.7px;font-size:20px">•</div>
<div class="doc" style="left:241.1px;top:563.7px">真实性：案例必须真实可信，避免虚构或夸大。</div>
<svg style="left:662px;top:431px" width="11" height="17" viewBox="0 0 11 17"><path d="M0.8 0.8 V13 L3.8 10.2 L6 15.6 L8.2 14.6 L6 9.4 H10Z" fill="#111" stroke="#f4f4f4" stroke-width="0.8" stroke-linejoin="round"/></svg>
<!--SIDEST-->
<!-- vertical scroll + side toolbar (screen coords) -->
<div class="abs" style="left:1126.8px;top:213px;width:1px;height:608px;background:#e2e2e2"></div>
<div class="abs" style="left:1127.8px;top:107px;width:54.2px;height:714px;background:#ececec;z-index:-1"></div>
<svg style="left:1116px;top:221px" width="8" height="8" viewBox="0 0 8 8"><path d="M1.6 0.4 H6.4 L4 2.8Z" fill="#8a8a8a"/><path d="M0.6 4.4 V7.4 H7.4 V4.4 M3 5.6 V7.4 M5 5.6 V7.4" fill="none" stroke="#8a8a8a" stroke-width="1"/></svg>
<svg style="left:1116.5px;top:238px" width="6" height="5" viewBox="0 0 6 5"><path d="M3 0.2 L5.8 4.6 H0.2Z" fill="#9a9a9a"/></svg>
<svg style="left:1116.5px;top:795.5px" width="6" height="5" viewBox="0 0 6 5"><path d="M3 4.8 L5.8 0.4 H0.2Z" fill="#8c8c8c"/></svg>
<div class="abs" style="left:1116.3px;top:433.5px;width:7px;height:94.5px;border-radius:3.5px;background:#dbdbdb"></div>
<div class="abs" style="left:1148.5px;top:234.8px;width:13.5px;height:1.8px;background:#a4a4a4"></div>
<svg style="left:1147.5px;top:259px" width="16" height="15" viewBox="0 0 16 15"><path d="M3 10.6 L11.6 1.6 Q12.8 0.4 14 1.6 Q15.2 2.8 14 4 L7.2 10.6Z M5 8.4 L7.8 10.2" fill="none" stroke="#555" stroke-width="1.05" stroke-linejoin="round"/><path d="M0.2 14 H15.6" stroke="#555" stroke-width="1.1"/></svg>
<svg style="left:1147.5px;top:297px" width="16" height="15" viewBox="0 0 16 15"><path d="M0.8 0.7 L14.6 5.2 L9.8 7.6 L14.2 12.4 L12 14.4 L7.6 9.6 L4.6 13.8Z" fill="none" stroke="#555" stroke-width="1.05" stroke-linejoin="round"/></svg>
<svg style="left:1147.5px;top:336px" width="16" height="14" viewBox="0 0 16 14"><path d="M0.2 3.6 H2.4 M6.6 3.6 H15.6 M0.2 10.6 H9.2 M13.4 10.6 H15.6" stroke="#555" stroke-width="1.05"/><circle cx="4.5" cy="3.6" r="2.3" fill="none" stroke="#555" stroke-width="1.05"/><circle cx="11.3" cy="10.6" r="2.3" fill="none" stroke="#555" stroke-width="1.05"/></svg>
<svg style="left:1147.5px;top:374px" width="16" height="15" viewBox="0 0 16 15"><path d="M5.4 13.6 H1.8 V7 Q0.4 6 0.8 4.4 L2.2 1.4 Q2.6 0.6 3.6 0.6 H12.4 Q13.4 0.6 13.8 1.4 L15.2 4.4 Q15.6 6 14.2 6.6 M1.8 7 Q3.4 7.4 4.4 6" fill="none" stroke="#555" stroke-width="1.05" stroke-linejoin="round"/><path d="M8 13.8 C7 11.4 7.4 8.8 9.6 6.6 C10.6 9 10.4 11.6 8.6 13.8Z M9.6 13.8 C10.4 11.8 12 10.4 14.4 9.8 C14.2 12.2 12.4 13.8 10 14Z M7.2 13.4 C6 12.4 5.6 11 6 9.4 C7 10.4 7.4 11.8 7.4 13.2Z" fill="none" stroke="#555" stroke-width="0.9" stroke-linejoin="round"/></svg>
<svg style="left:1147px;top:411.5px" width="16" height="15" viewBox="0 0 16 15"><path d="M2.2 4.4 A6.6 6.6 0 1 1 1.6 9.6" fill="none" stroke="#555" stroke-width="1.05"/><path d="M0.6 1.8 L2 4.8 L5 3.8" fill="none" stroke="#555" stroke-width="1.05" stroke-linejoin="round"/><path d="M7.6 3.6 V7.6 L10 10.2" fill="none" stroke="#555" stroke-width="1.05"/></svg>
<svg style="left:1147.5px;top:455px" width="16" height="6" viewBox="0 0 16 6"><circle cx="2.4" cy="3" r="1.8" fill="none" stroke="#555" stroke-width="0.95"/><circle cx="8" cy="3" r="1.8" fill="none" stroke="#555" stroke-width="0.95"/><circle cx="13.6" cy="3" r="1.8" fill="none" stroke="#555" stroke-width="0.95"/></svg>
<!-- left vertical ruler bit + hscroll -->
<div class="abs" style="left:5px;top:763.5px;width:12.5px;height:42px;border-radius:3.5px;background:#dcdcdc"></div>
<div class="abs" style="left:6.4px;top:775px;width:12px;height:12px;line-height:12px;text-align:center;font-size:10px;color:#555;transform:rotate(-90deg)">4</div>
<svg style="left:8.5px;top:810px" width="5" height="6" viewBox="0 0 5 6"><path d="M0.3 3 L4.7 0.3 V5.7Z" fill="#8c8c8c"/></svg>
<svg style="left:1097.5px;top:810px" width="5" height="6" viewBox="0 0 5 6"><path d="M4.7 3 L0.3 0.3 V5.7Z" fill="#8c8c8c"/></svg>
<div class="abs" style="left:64.5px;top:809.3px;width:1023px;height:7.4px;border-radius:3.7px;background:#dddddd"></div>
<!-- status bar -->
<div class="abs" style="left:0;top:821px;width:1182px;height:1px;background:#e0e0e0"></div>
<div class="abs" style="left:0;top:822px;width:1182px;height:24px;background:#ececec;z-index:-1"></div>
<div class="sb" style="left:15.5px;top:827px">页码: 2</div>
<div class="sb" style="left:82px;top:827px">页面: 2/2</div>
<div class="sb" style="left:161.5px;top:827px">节: 1/1</div>
<div class="sb" style="left:229.5px;top:827.5px">行: 24</div>
<div class="sb" style="left:283px;top:827.5px">列: 28</div>
<div class="sb" style="left:351px;top:827px">字数: 831</div>
<div class="sb" style="left:429.5px;top:827px">拼写检查: 打开</div>
<svg class="car" style="left:518.5px;top:831.5px" width="6" height="4" viewBox="0 0 6 4"><path d="M0.6 0.6 L3 3 L5.4 0.6" fill="none" stroke="#444" stroke-width="1.3"/></svg>
<div class="sb" style="left:553px;top:827px">文档校对</div>
<div class="vsep sbs" style="left:68px"></div><div class="vsep sbs" style="left:148.5px"></div><div class="vsep sbs" style="left:210px"></div><div class="vsep sbs" style="left:336.5px"></div><div class="vsep sbs" style="left:416.5px"></div><div class="vsep sbs" style="left:539.5px"></div><div class="vsep sbs" style="left:763px"></div><div class="vsep sbs" style="left:866.5px"></div>
<svg style="left:736.5px;top:828px" width="14" height="10" viewBox="0 0 14 10"><path d="M0.6 5 C2.2 2 4.4 0.7 7 0.7 C9.6 0.7 11.8 2 13.4 5 C11.8 8 9.6 9.3 7 9.3 C4.4 9.3 2.2 8 0.6 5Z" fill="none" stroke="#555" stroke-width="1.05"/><circle cx="7" cy="5" r="2" fill="none" stroke="#555" stroke-width="1.05"/></svg>
<div class="abs" style="left:773px;top:822px;width:23px;height:22px;border-radius:3px;background:#dfdfdf"></div>
<svg style="left:779px;top:827px" width="12" height="13" viewBox="0 0 12 13"><rect x="0.6" y="0.6" width="10.8" height="11.8" rx="0.8" fill="none" stroke="#555" stroke-width="1.05"/><path d="M3 4 H9 M3 6.8 H6.4" stroke="#555" stroke-width="1.05"/></svg>
<svg style="left:808px;top:827.5px" width="13" height="12" viewBox="0 0 13 12"><path d="M3 1 H12.6 M5.4 4.4 H12.6 M5.4 7.6 H12.6 M3 11 H12.6" stroke="#555" stroke-width="1.05"/><path d="M0.2 1 H1.4 M0.2 11 H1.4 M2.6 4.4 H3.8 M2.6 7.6 H3.8" stroke="#555" stroke-width="1.05"/></svg>
<svg style="left:839.5px;top:826.5px" width="14" height="14" viewBox="0 0 14 14"><circle cx="7" cy="7" r="6.2" fill="none" stroke="#555" stroke-width="1.05"/><ellipse cx="7" cy="7" rx="2.6" ry="6.2" fill="none" stroke="#555" stroke-width="1"/><path d="M0.8 7 H13.2" stroke="#555" stroke-width="1"/></svg>
<svg style="left:880px;top:826px" width="15" height="14" viewBox="0 0 15 14"><path d="M0.6 4.2 V2 Q0.6 0.6 2 0.6 H4.4 M10.6 0.6 H13 Q14.4 0.6 14.4 2 V4.2 M14.4 9.8 V12 Q14.4 13.4 13 13.4 H10.6 M4.4 13.4 H2 Q0.6 13.4 0.6 12 V9.8" fill="none" stroke="#555" stroke-width="1.1"/><rect x="4.4" y="4" width="6.2" height="6" rx="0.6" fill="none" stroke="#555" stroke-width="1.1"/></svg>
<div class="sb" style="left:915px;top:827px;color:#666a78">190%</div>
<svg class="car" style="left:959.5px;top:831.5px" width="6" height="4" viewBox="0 0 6 4"><path d="M0.6 0.6 L3 3 L5.4 0.6" fill="none" stroke="#444" stroke-width="1.3"/></svg>
<div class="abs" style="left:982.5px;top:831.6px;width:11.5px;height:2px;background:#4a4a4a"></div>
<div class="abs" style="left:1007.5px;top:831.2px;width:101.5px;height:2px;background:#c9c9c9;border-radius:1px"></div>
<div class="abs" style="left:1007.5px;top:831.2px;width:56px;height:2px;background:#5577e2;border-radius:1px"></div>
<div class="abs" style="left:1063.1px;top:827.4px;width:9.4px;height:9.4px;border-radius:50%;background:radial-gradient(circle,#adadad 0 40%,#f6f6f6 52%);box-shadow:0 0 1px rgba(0,0,0,.35)"></div>
<svg style="left:1123.5px;top:828px" width="10" height="10" viewBox="0 0 10 10"><path d="M5 0.4 V9.6 M0.4 5 H9.6" stroke="#444" stroke-width="1.6"/></svg>
<svg style="left:1153px;top:826.5px" width="13" height="13" viewBox="0 0 13 13"><path d="M0.6 4.4 V2 Q0.6 0.6 2 0.6 H4.4 M8.2 0.6 H12.4 V4.8 M12.4 0.6 L8.4 4.6 M12.4 8.6 V11 Q12.4 12.4 11 12.4 H8.6 M4.8 12.4 H0.6 V8.2 M0.6 12.4 L4.6 8.4" fill="none" stroke="#555" stroke-width="1.05"/></svg>
<!--SCR-->
</div>
<!--RULER-->
<!--DOC-->
<!--SIDE-->
<!--STATUS-->
</div>
<div class="abs ov" style="left:0;top:0;width:1440px;height:915px">
<!-- recording badge -->
<div class="abs" style="left:18px;top:57px;width:106.3px;height:44.7px;border-radius:5.5px;background:#444444"></div>
<svg style="left:27px;top:71px" width="25" height="19" viewBox="0 0 25 19"><path d="M5.4 18.2 C2.4 18.2 0.5 16.2 0.5 13.8 C0.5 11.6 2 9.9 4.2 9.6 C4.6 6.6 7 4.4 9.8 4.4 C10.4 2.2 12.6 0.6 15 0.6 C18.2 0.6 20.8 3.2 20.8 6.4 C20.8 6.8 20.8 7.2 20.7 7.6 C22 8.6 22.6 10 22.6 11.6 C22.6 15.2 20 18.2 16.4 18.2Z" fill="#fff"/><circle cx="19.3" cy="12.8" r="5.6" fill="#444"/><circle cx="19.3" cy="12.8" r="4.6" fill="#f23c30"/></svg>
<div class="t" style="left:58.5px;top:72.8px;font-size:17.6px;color:#fff">录制中</div>
<!-- video tile -->
<div class="abs" style="left:1188px;top:390px;width:240px;height:135px;background:#2b2f33;border:3px solid #08c564"></div>
<div class="abs" style="left:1191px;top:498.5px;width:60px;height:23.5px;background:#121314;border-radius:0 8px 0 0"></div>
<svg style="left:1196.5px;top:504px" width="14" height="15" viewBox="0 0 14 15"><defs><linearGradient id="mg" x1="0" y1="0" x2="0" y2="1"><stop offset="0" stop-color="#fff"/><stop offset="0.45" stop-color="#fff"/><stop offset="0.55" stop-color="#37e06f"/><stop offset="1" stop-color="#37e06f"/></linearGradient></defs><rect x="3.8" y="0.3" width="6.4" height="10" rx="3.2" fill="url(#mg)"/><path d="M1 6.6 Q1 12.2 7 12.2 Q13 12.2 13 6.6" fill="none" stroke="#fff" stroke-width="1.5" stroke-linecap="round"/><path d="M7 12.2 V14.6" stroke="#fff" stroke-width="1.6"/></svg>
<div class="t" style="left:1215.7px;top:505.3px;font-size:14.4px;color:#fff">肖雪</div>
<svg style="left:1270.8px;top:403.6px" width="75" height="75" viewBox="0 0 75 75"><defs><filter id="bl" x="-5%" y="-5%" width="110%" height="110%"><feGaussianBlur stdDeviation="0.55"/></filter><clipPath id="av"><circle cx="37.5" cy="37.5" r="36.4"/></clipPath><linearGradient id="fab" x1="0" y1="0" x2="1" y2="1"><stop offset="0" stop-color="#4f6572"/><stop offset="0.5" stop-color="#6a818e"/><stop offset="1" stop-color="#8b9ea8"/></linearGradient><pattern id="wv" width="2.2" height="2.2" patternUnits="userSpaceOnUse" patternTransform="rotate(38)"><rect width="2.2" height="2.2" fill="none"/><path d="M0 0.5 H2.2" stroke="#a9b8c0" stroke-width="0.35" opacity=".55"/></pattern></defs><g clip-path="url(#av)"><g filter="url(#bl)"><rect x="-3" y="-3" width="81" height="81" fill="url(#fab)"/><rect width="75" height="75" fill="url(#wv)"/><path d="M21.3 37.6 L26.5 35.0 L32.7 32.1 L38.9 30.0 L45.2 29.3 L56 29 L48 34 L39.5 37 L32 42.5 L27 46Z" fill="#3f505b" opacity=".75"/><path d="M-1.0 22.5 L5.7 17.3 L13.0 13.7 L23.4 9.6 L34.8 5.9 L43.1 4.4 L51.4 4.0 Q56.5 4.6 59.7 7.0 Q63.6 9.6 65.9 13.2 Q69 17 69.6 20.5 Q68.6 23.4 66.5 24.6 L60.7 27.2 L53.5 29.3 L45.2 29.3 L38.9 30.0 L32.7 32.1 L26.5 35.0 L21.3 37.6 L24.4 42.3 L30.6 47.5 Q34 50.6 34.8 53.7 Q35.6 57.6 34.0 59.9 Q31.8 62.6 28.6 63.2 L20.2 62.8 L13.0 60.1 L7.8 56.0 L3.6 49.5 L-0.5 41.2Z" fill="#f2f0ea"/><path d="M3.6 49.5 L7.8 56.0 L13.0 60.1 L20.2 62.8 L28.6 63.2 Q31.8 62.6 34 59.9 Q28 61.4 21 59.6 Q12 57 6 48Z" fill="#d6d3cb" opacity=".8"/><path d="M10 26 Q18 30 21.3 37.6 Q16 33 8 31Z" fill="#dcd9d2" opacity=".7"/><ellipse cx="4.2" cy="41" rx="3.8" ry="7.2" fill="#5b5955"/><ellipse cx="50.4" cy="18.9" rx="4.6" ry="5.8" fill="#e2a08f"/><circle cx="37.4" cy="11.1" r="2" fill="#e6a99b"/><circle cx="30.8" cy="26.2" r="2.5" fill="#e6a193"/><ellipse cx="58.6" cy="10.4" rx="3" ry="2.2" fill="#e6a193"/><circle cx="64" cy="22.4" r="2" fill="#ecb6aa"/><circle cx="55.5" cy="27.6" r="1.4" fill="#ecb6aa"/></g></g><circle cx="37.5" cy="37.5" r="36.6" fill="none" stroke="#fff" stroke-width="1.5"/></svg>

</div>
</body>
</html>
